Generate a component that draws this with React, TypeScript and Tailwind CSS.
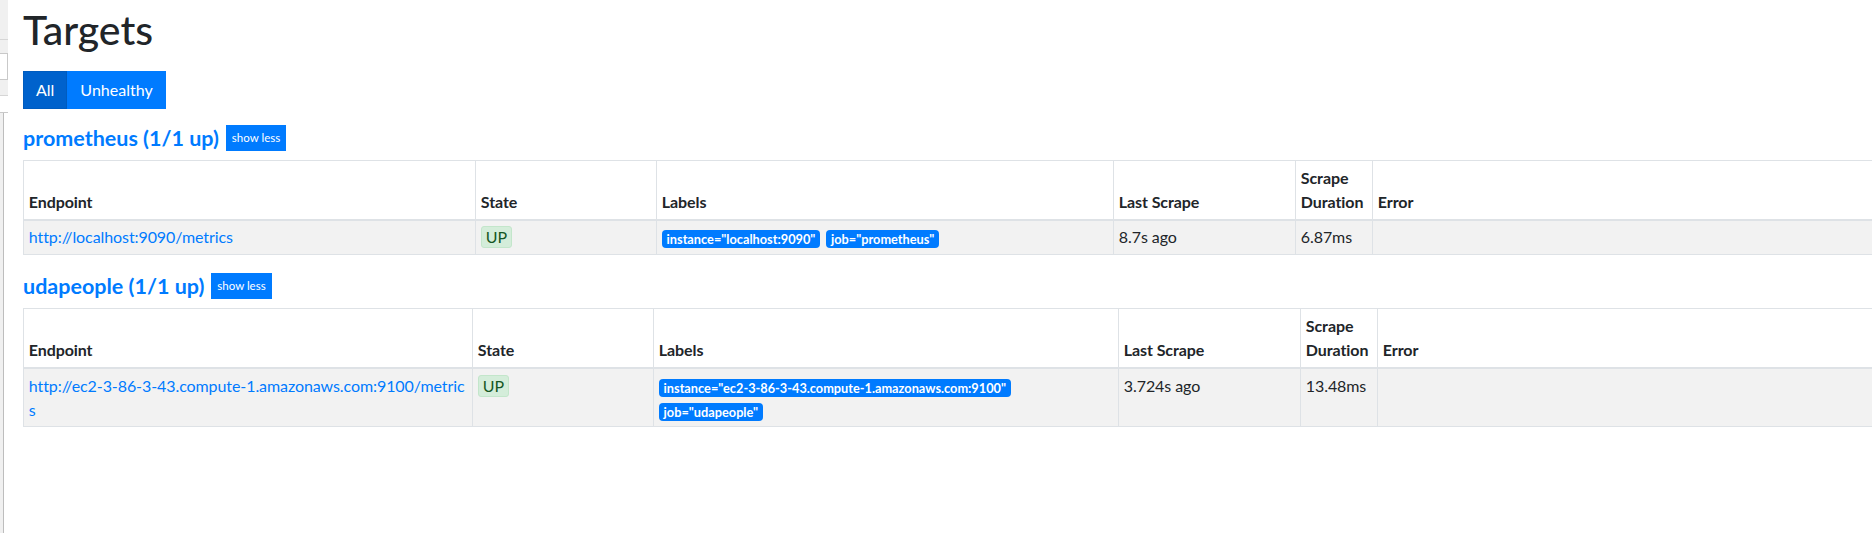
import React from "react";

type Target = {
  endpoint: string;
  labels: [string, string][];
  lastScrape: string;
  duration: string;
};

type Pool = {
  name: string;
  up: number;
  total: number;
  widths: string[];
  targets: Target[];
};

const pools: Pool[] = [
  {
    name: "prometheus",
    up: 1,
    total: 1,
    widths: ["w-[452px]", "w-[181px]", "w-[457px]", "w-[182px]", "w-[77px]"],
    targets: [
      {
        endpoint: "http://localhost:9090/metrics",
        labels: [
          ["instance", "localhost:9090"],
          ["job", "prometheus"],
        ],
        lastScrape: "8.7s ago",
        duration: "6.87ms",
      },
    ],
  },
  {
    name: "udapeople",
    up: 1,
    total: 1,
    widths: ["w-[449px]", "w-[181px]", "w-[465px]", "w-[182px]", "w-[77px]"],
    targets: [
      {
        endpoint: "http://ec2-3-86-3-43.compute-1.amazonaws.com:9100/metrics",
        labels: [
          ["instance", "ec2-3-86-3-43.compute-1.amazonaws.com:9100"],
          ["job", "udapeople"],
        ],
        lastScrape: "3.724s ago",
        duration: "13.48ms",
      },
    ],
  },
];

const cell = "border border-[#dee2e6] px-[4.8px] py-[4.8px]";
const headCell = `${cell} border-b-2 text-left align-bottom font-bold`;

function WindowEdge() {
  // sliver of the neighbouring window on the left
  return (
    <div className="flex w-[8px] shrink-0 flex-col bg-[#f0f0f0]">
      <div className="h-[40px] border-b border-[#d6d6d6]" />
      <div className="h-[13px]" />
      <div className="h-[27px] border border-l-0 border-[#c9c9c9] bg-white" />
      <div className="h-[16px] border-b border-[#d6d6d6]" />
      <div className="h-[17px] border-b border-[#c9c9c9] bg-white" />
      <div className="flex flex-1">
        <div className="w-[4px] border-r border-[#bdbdbd] bg-[#f0f0f0]" />
        <div className="flex-1 bg-white" />
      </div>
    </div>
  );
}

function PoolPanel({ pool }: { pool: Pool }) {
  const w = pool.widths;
  return (
    <div>
      <div className="flex items-center gap-[7px]">
        <h3 className="text-[21.5px] font-bold leading-6 text-[#007bff]">
          {pool.name} ({pool.up}/{pool.total} up)
        </h3>
        <button className="bg-[#007bff] px-[6px] py-[4px] text-[11.5px] leading-[18px] text-white">
          show less
        </button>
      </div>
      <table className="mt-[9px] w-[1880px] table-fixed border-collapse text-[16px] leading-6 tracking-[-0.08px] text-[#212529]">
        <thead>
          <tr>
            <th className={`${headCell} ${w[0]}`}>Endpoint</th>
            <th className={`${headCell} ${w[1]}`}>State</th>
            <th className={`${headCell} ${w[2]}`}>Labels</th>
            <th className={`${headCell} ${w[3]}`}>Last Scrape</th>
            <th className={`${headCell} ${w[4]}`}>Scrape Duration</th>
            <th className={headCell}>Error</th>
          </tr>
        </thead>
        <tbody>
          {pool.targets.map((t) => (
            <tr key={t.endpoint} className="bg-[#f2f2f2]">
              <td className={`${cell} align-top break-all`}>
                <a href={t.endpoint} className="text-[#007bff]">
                  {t.endpoint}
                </a>
              </td>
              <td className={`${cell} align-top`}>
                <span className="inline-block rounded-[3px] border border-[#c3e6cb] bg-[#d4edda] px-[4px] leading-5 text-[#155724]">
                  UP
                </span>
              </td>
              <td className={`${cell} align-top`}>
                {t.labels.map(([k, v]) => (
                  <span
                    key={k}
                    className="mr-[6px] inline-block rounded-[4px] bg-[#007bff] px-[4.8px] py-[3px] align-middle text-[12.75px] font-bold leading-[12px] tracking-normal text-white"
                  >
                    {k}="{v}"
                  </span>
                ))}
              </td>
              <td className={`${cell} align-top`}>{t.lastScrape}</td>
              <td className={`${cell} align-top`}>{t.duration}</td>
              <td className={`${cell} align-top`} />
            </tr>
          ))}
        </tbody>
      </table>
    </div>
  );
}

export default function App() {
  return (
    <div className="flex min-h-screen overflow-hidden bg-white font-['Lato',sans-serif] text-[#212529]">
      <WindowEdge />
      <div className="min-w-0 flex-1 overflow-hidden px-[15px] pt-[6px]">
        <h1 className="text-[41px] font-medium leading-[48px]">Targets</h1>
        <div className="mt-[17px] flex">
          <button className="border border-[#005cbf] bg-[#0062cc] px-[12px] py-[6px] text-[16px] leading-6 text-white">
            All
          </button>
          <button className="border border-[#007bff] bg-[#007bff] px-[12px] py-[6px] text-[16px] leading-6 text-white">
            Unhealthy
          </button>
        </div>
        <div className="mt-[16px] flex flex-col gap-[18px]">
          {pools.map((p) => (
            <PoolPanel key={p.name} pool={p} />
          ))}
        </div>
      </div>
    </div>
  );
}
